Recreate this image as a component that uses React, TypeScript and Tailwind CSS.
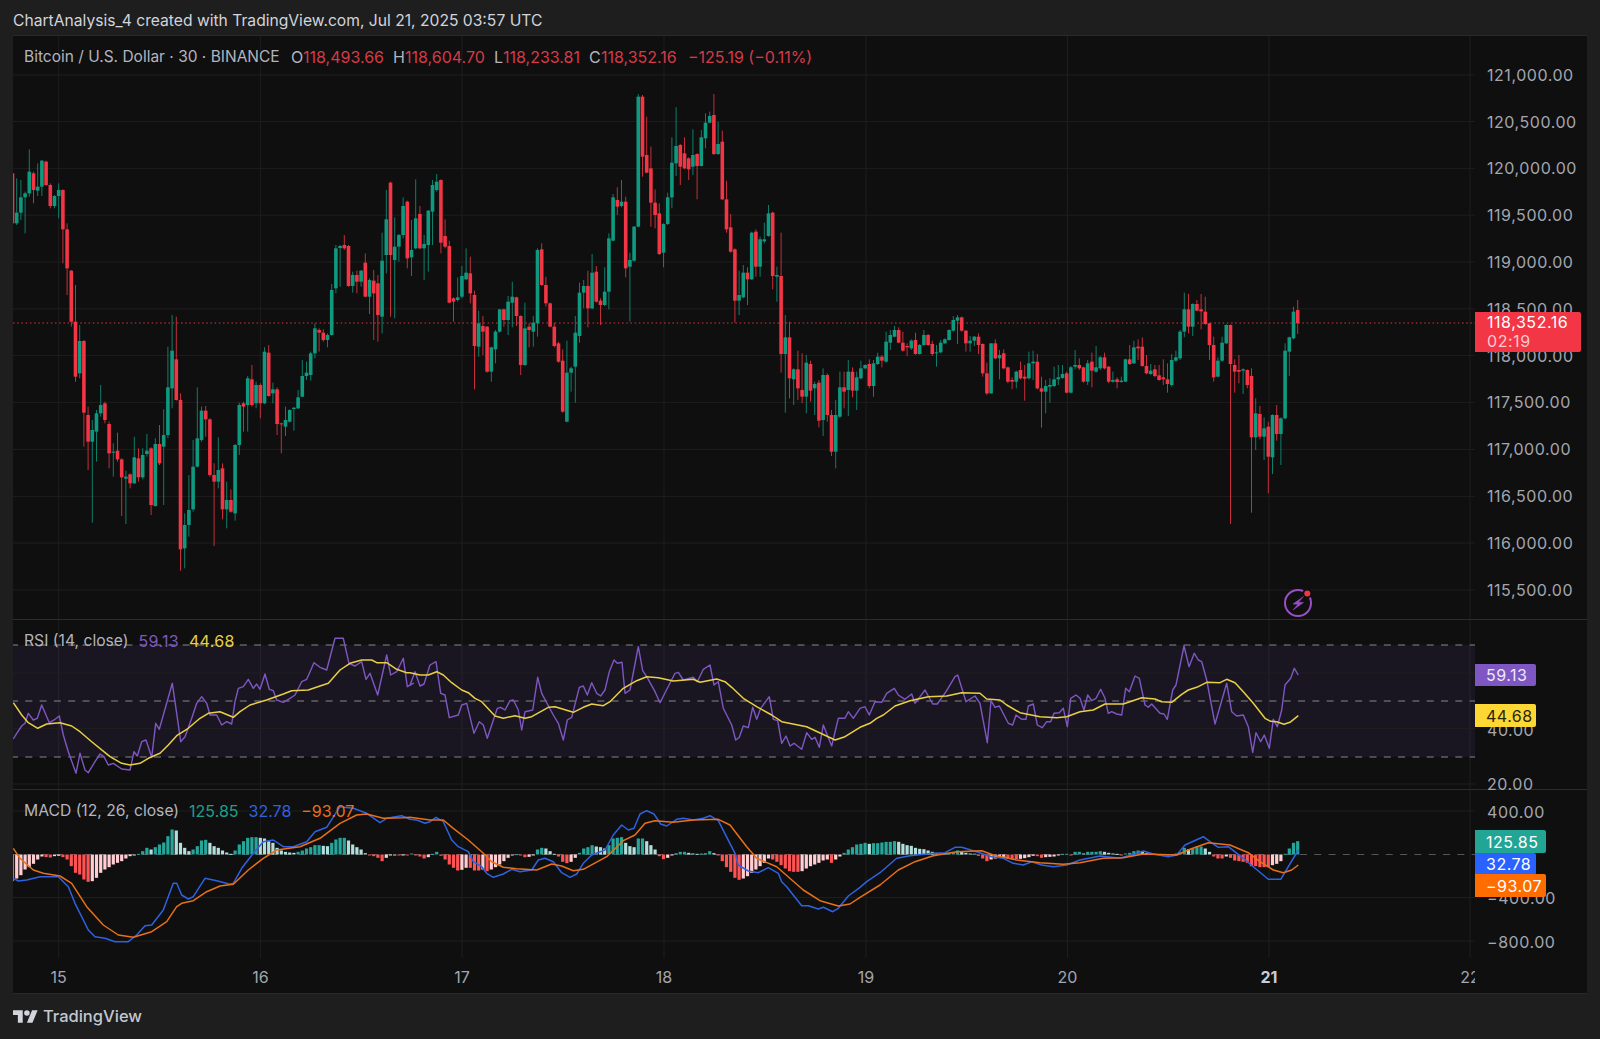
const GREEN = "#0f9a80";
const RED = "#f23645";
const PURPLE = "#7e57c2";
const YELLOW = "#e9cf45";
const BLUE = "#2f62e0";
const ORANGE = "#e8701a";
const GRID = "#1e1e1e";

const PLOT_X = 13;
const PLOT_W = 1462;
const barX = (i: number) => 12.5 + 4.2 * i;
const dayLines = [58.7, 260.4, 462, 664, 866, 1067.5, 1269, 1470];

// candles traced from the picture: color body-top body-bottom high low, offset by the crop they were read from
const candleRows: [number, string][] = [
  [140, `r100,250,100,255 g218,250,115,255 g172,218,120,240 g160,172,155,280 g95,160,28,170 r100,150,95,190 g140,152,70,168 g62,140,60,168 r65,135,62,138 r135,198,130,205
g168,198,165,205 g150,168,130,235 r150,268,148,370 r268,385,250,465 r392,545,390,560 r545,710,435,725 g603,700,555,715 r603,818,600,920 r825,905,800,990 g870,905,840,1148
g820,875,810,965 g795,820,735,830 r790,840,785,850 r852,940,845,985 g935,938,910,1010 r932,958,878,965 r958,1012,955,1128 g1010,1016,992,1152 r1003,1030,1000,1045 g952,1030,890,1032
r955,1012,925,1025 g945,1012,925,1018 g932,942,882,950 r925,1095,922,1125 g912,1098,895,1100 r912,970,855,975 g885,920,808,1095 g742,885,620,895 g632,745,525,805 r658,780,530,782
r780,1228,760,1292 g1155,1225,1120,1285 g1110,1155,1005,1190 g980,1108,900,1115 g895,980,742,982 g812,900,800,905 r812,838,798,890 r838,1005,835,1010 r1005,1025,970,1218 g990,1025,892,1045
r985,1108,970,1138 g1080,1108,1025,1165 r1080,1115,1048,1118 g915,1120,912,1142 g795,915,788,945 r790,800,785,875 g715,795,708,875 r718,795,675,800 g735,790,725,805 r735,790,730,835
g635,790,622,792 r638,768,615,770 g748,760,728,790 r748,852,742,885 r850,853,848,940 g840,860,800,888 g810,845,808,848 g803,807,802,872 g772,805,750,807 g708,770,660,772
g698,708,665,720 g640,705,635,722 g565,640,550,655 r570,578,565,635 r578,600,568,605 g585,600,580,622 g450,585,432,587 g325,445,315,460 g318,324,315,440 r315,325,285,330
r318,438,315,440 g405,438,395,458 r405,425,392,460 g392,425,390,440 r368,470,340,472 g420,470,415,522 r422,460,390,600 r430,525,405,605 g362,530,278,580 g238,345,150,400
r128,345,125,530 g320,360,232,535 g285,320,282,365 g198,285,172,295 r185,355,182,385 g330,352,240,408 g235,325,118,328 r222,325,198,328 g312,325,285,420 g212,315,210,395`],
  [80, `g315,395,300,495 g305,330,282,335 r300,488,298,520 r468,500,418,505 r498,668,482,670 r655,665,652,725 g652,660,592,665 g588,650,558,655 g578,598,505,600 r580,640,530,670
r645,798,632,928 g730,800,692,830 r738,755,708,825 r740,875,738,878 g802,875,800,905 g755,808,750,850 g688,755,688,758 r688,720,686,740 g665,720,648,765 g650,668,605,742
r652,708,650,738 r708,855,706,885 g745,855,668,858 r740,750,730,802 g728,755,708,800 g510,730,505,770 r508,615,490,618 r615,670,590,680 r670,740,668,742 r740,798,728,802
r790,845,785,848 r842,995,808,998 g878,1025,782,1027 g865,878,860,935 g758,860,708,968 g638,768,608,788 g618,638,600,685 r618,685,572,742 g578,685,522,688 r575,665,558,668
r662,675,655,735 g635,675,562,678 g475,635,460,688 g352,482,342,484 r360,380,322,405 g365,378,300,382 r365,565,350,592 g540,560,518,725 g440,542,438,545 g50,440,42,442
r50,230,45,290 r225,278,110,280 r265,368,200,440 r368,405,328,445 r400,522,370,525 g432,518,430,562 g352,432,338,435 g248,352,172,385 g198,250,82,288 r195,260,192,315
r220,265,172,268 r235,268,232,300 g225,260,148,285 r222,258,220,358 g172,258,150,260 g128,175,100,205 g108,128,95,130 r105,222,42,225 g192,222,125,225 r185,358,152,360
r358,448,302,458 r442,515,402,518 r508,662,505,728 g645,662,572,705 g578,652,555,655 r578,598,562,675 g458,598,455,600 r455,560,448,590 g478,560,470,590 g478,484,428,490
g400,468,375,470 r398,588,395,628 g585,590,560,665 r588,822,458,878 g772,822,705,998 r772,895,725,955 g868,898,865,975 r868,925,812,960 r930,950,820,970 g848,950,825,1000
r852,932,842,965 g912,925,905,1005 r908,1022,900,1042 g885,1020,865,1068 r885,1005,880,1025 r1005,1115,990,1128 g1005,1115,960,1165 g922,1010,875,1015 r922,935,875,985 g875,930,840,1008`],
  [280, `r275,332,262,352 g292,332,275,390 g265,295,242,298 g255,265,253,268 r252,318,238,325 g250,318,240,350 g230,252,218,255 r230,242,225,262 g185,245,155,248 g165,188,150,210
g150,170,138,172 r150,188,142,190 r188,212,155,215 r198,202,190,228 g182,205,178,210 r180,222,158,224 g195,222,192,224 g165,195,150,197 r165,195,162,198 r192,222,182,228
g217,220,195,260 g188,217,180,220 g178,190,175,192 g150,180,148,182 g120,152,108,155 g112,122,105,192 r112,152,110,155 r152,190,150,215 g182,190,168,215 g170,182,168,198
r170,195,160,222 r192,280,190,290 r280,340,248,345 g190,340,190,342 r190,235,178,238 g225,235,210,298 r220,265,208,268 r262,305,260,310 r300,305,292,328 g275,305,272,325
r270,295,245,298 r290,296,255,362 g250,295,215,298 g245,250,212,300 r245,325,222,328 r325,335,290,443 g318,335,300,400 g315,320,295,368 g298,318,260,322 g292,298,255,315
g282,294,255,296 r280,338,275,340 g262,338,258,340 g255,260,210,268 r255,265,235,270 r262,305,260,308 g250,305,240,315 r245,272,218,322 g262,275,198,278 g232,265,228,270
r232,265,218,268 r260,305,258,310 g300,305,275,308 r298,306,292,325 g302,306,290,308 g238,305,236,306 r238,252,195,255 g202,250,182,252 r200,205,178,240 r200,258,172,260
r258,280,225,283 g272,282,252,285 r268,288,255,292 r286,300,255,302 r292,298,238,315 r298,312,250,338 g240,315,222,320 g232,242,212,245 g155,235,150,240 g88,155,38,172
r88,140,42,160 g72,140,70,168 r72,92,60,94 r88,94,42,148 r95,132,50,135 r130,195,128,240 r195,292,170,305 g242,290,232,292 g188,242,170,245 g135,190,133,192
r135,252,133,732 r255,275,238,338 r270,275,225,310 g268,272,265,342 r270,315,268,325 r288,472,265,698 g400,472,355,510 r402,470,378,478 g445,470,412,540 r440,530,425,640
g405,532,403,582 r405,462,375,482 g415,462,412,555 g212,415,190,418 g172,215,170,288 g95,175,80,178 r90,130,60,162`],
];

const candles = candleRows.flatMap(([y0, text]) =>
  text.trim().split(/\s+/).map((item) => {
    const [top, bottom, high, low] = item.slice(1).split(",").map((n) => y0 + Number(n) / 3);
    return { up: item[0] === "g", top, bottom, high, low };
  })
);

// macd histogram, heights in crop units (3 = 1px)
const histogram = [
  -80, -72, -62, -45, -38, -28, -15, -6, -8, -9, -5, -4, -8, -15, -35, -55, -60, -75, -82, -80,
  -70, -55, -45, -38, -30, -25, -20, -12, -5, -3, 2, 10, 20, 15, 22, 30, 36, 55, 75, 72,
  35, 20, 10, 15, 25, 42, 44, 35, 25, 20, 12, 6, 2, 12, 30, 40, 50, 52, 52, 50,
  48, 40, 35, 20, 12, 8, 6, 5, 8, 12, 18, 22, 28, 28, 26, 25, 35, 45, 50, 50,
  42, 30, 22, 15, 4, -3, -5, -10, -20, -10, -3, -2, -2, -1, -3, 3, -3, -6, -12, -8,
  2, 8, -4, -15, -30, -40, -48, -46, -40, -40, -48, -48, -45, -50, -45, -38, -30, -20, -10, -2,
  1, -2, -8, -7, -3, 15, 20, 18, 10, 2, -6, -22, -26, -22, -10, 5, 18, 22, 28, 24,
  22, 18, 28, 48, 50, 52, 35, 25, 22, 48, 48, 40, 28, 15, -5, -14, -10, -2, 4, 8,
  8, 5, 3, 2, 3, 4, 10, 4, -3, -20, -38, -52, -70, -76, -72, -65, -55, -45, -35, -25,
  -12, -15, -22, -32, -42, -50, -52, -52, -50, -42, -35, -30, -25, -18, -15, -25, -15, -6, 5, 15,
  22, 30, 32, 35, 32, 34, 34, 36, 38, 38, 40, 38, 32, 28, 26, 20, 17, 16, 12, 8,
  4, 3, 4, 5, 7, 12, 8, 5, 3, 3, -4, -12, -20, -15, -12, -10, -8, -12, -14, -14,
  -13, -11, -8, -4, -5, -10, -8, -7, -6, -2, 2, 2, -1, 8, 8, 3, 8, 8, 8, 10,
  8, 5, 3, 2, -2, 3, 5, 10, 12, 10, 4, 2, 2, 1, -2, -2, 1, 3, 6, 20,
  16, 18, 24, 24, 18, 8, -6, -12, -12, -6, -10, -18, -20, -22, -25, -35, -35, -38, -38, -38,
  -32, -28, -20, 2, 18, 35, 40,
];

const histColor = (v: number, prev: number) => {
  if (v >= 0) return v >= prev ? "#26a69a" : "#b2dfdb";
  return v <= prev ? "#ff5252" : "#ffcdd2";
};

const crop = (x0: number, y0: number, text: string) =>
  text
    .trim()
    .split(/\s+/)
    .map((p) => {
      const [x, y] = p.split(",").map(Number);
      return `${(x0 + x / 3).toFixed(1)},${(y0 + y / 3).toFixed(1)}`;
    })
    .join(" ");

const rsiLine = [
  crop(0, 620, "40,357 50,340 65,318 75,310 85,280 100,300 112,295 125,255 148,308 165,298 178,288 190,345 205,395 228,460 240,400 255,450 265,458 285,425 300,402 312,410 325,435 340,430 365,447 390,450 402,395 412,408 425,365 438,360 455,412 467,310 478,328 517,190 530,280 542,365 555,350 575,295 590,250 605,230 620,250 630,285 650,285 665,315 680,305 695,312 705,245 715,205 730,200 745,178 760,205 770,192 780,208 795,162 808,208 820,212 830,240 850,247 870,235 885,225 905,185 920,178 942,128 960,142 980,150 1005,55 1030,55 1047,130 1065,138 1085,125 1098,178 1110,160 1133,225 1160,105 1172,165 1190,155 1210,115 1222,200 1240,190"),
  crop(410, 630, "0,165 15,125 30,168 42,162 60,105 78,95 92,190 105,195 118,263 145,255 155,225 170,220 192,310 208,275 220,285 232,325 262,235 272,232 285,240 300,212 310,210 325,240 335,300 345,245 368,240 383,142 395,190 430,255 445,280 460,330 472,270 485,262 508,172 520,168 532,195 545,158 560,190 572,198 585,180 598,125 612,90 622,100 636,97 645,190 660,180 685,50 698,122 710,140 735,185 750,218 795,130 805,127 820,150 850,142 862,155 880,118 900,105 912,165 925,155 940,235 965,285 977,330 988,322 1000,288 1015,293 1028,232 1040,268 1052,235 1078,200 1090,268 1103,272 1115,340 1128,318 1140,348 1152,340 1175,358 1190,308 1205,328 1215,322 1228,352 1240,285 1265,348 1285,265 1305,265 1315,245 1330,265"),
  crop(860, 630, "0,235 15,230 28,255 45,215 65,217 80,190 103,175 115,195 135,208 155,192 165,220 195,180 218,222 232,222 258,185 285,140 293,135 318,215 345,198 360,220 382,338 393,212 405,232 418,228 445,280 458,285 468,255 485,268 498,268 505,228 520,222 532,285 547,293 560,275 572,275 582,250 598,248 610,235 622,290 632,205 648,195 660,205 672,240 683,195 695,212 708,205 722,178 735,205 745,250 755,245 770,252 785,255 797,175 808,185 825,138 838,145 855,225 865,232 875,222 900,250 912,252 922,268 938,180 948,165 972,48 987,110 1003,70 1015,90 1025,95 1040,150 1065,282 1100,160 1115,245 1130,258 1150,255 1165,290 1178,367 1188,308 1202,335 1213,315 1228,355 1240,268 1252,290 1265,240 1275,165 1292,145 1303,115 1315,135"),
].join(" ");

const rsiAvg = [
  crop(0, 620, "40,248 65,285 85,308 113,325 140,312 180,308 215,318 240,335 275,365 330,410 365,430 390,435 420,430 445,415 480,400 505,375 530,347 565,325 600,295 625,280 660,275 700,292 720,275 750,255 800,240 850,222 875,212 925,210 960,198 985,190 1020,150 1050,130 1085,120 1115,120 1130,128 1160,128 1190,148 1220,158"),
  crop(410, 630, "0,128 30,135 55,135 80,125 100,135 125,158 155,180 175,188 195,205 215,215 255,258 280,265 315,257 345,265 365,260 415,232 435,230 490,247 520,232 545,222 580,227 600,215 640,175 680,152 710,140 745,143 790,153 850,148 870,157 920,147 945,155 965,172 1000,205 1040,230 1085,255 1115,275 1190,290 1275,330 1305,320"),
  crop(860, 630, "0,292 30,280 50,265 70,255 105,228 150,212 205,200 260,198 305,188 360,190 380,207 420,210 440,225 480,248 540,260 590,263 620,260 660,245 700,240 735,222 790,222 845,203 885,207 905,215 935,217 965,193 985,180 1010,172 1040,157 1080,158 1100,148 1125,158 1150,185 1180,220 1215,265 1232,274 1250,275 1272,283 1290,277 1315,257"),
].join(" ");

const macdLine = [
  crop(0, 620, "40,775 55,783 80,780 120,770 175,770 205,800 225,850 265,930 285,950 315,955 345,965 385,965 410,945 435,917 455,915 490,870 520,790 530,790 545,825 565,837 580,830 615,775 650,782 690,793 700,790 725,745 760,700 790,665 820,660 850,680 880,680 920,665 945,635 980,622 1020,560 1060,565 1100,580 1140,608 1160,595 1205,587"),
  crop(410, 790, "0,88 20,90 45,100 60,95 78,82 100,95 125,150 145,170 175,185 190,215 215,230 230,250 250,262 280,252 305,238 330,245 365,240 385,210 405,205 430,215 455,248 480,262 500,252 520,220 545,195 585,180 610,135 635,105 655,120 672,115 690,72 710,62 732,72 752,102 770,108 800,88 820,85 850,90 880,85 900,77 925,92 975,190 985,225 1015,243 1045,248 1075,233 1105,250 1115,275 1130,290 1175,347 1195,347 1225,357 1240,352 1268,365 1285,355 1315,318"),
  crop(860, 790, "0,292 20,275 60,248 110,205 150,197 220,190 255,188 285,172 305,172 340,182 370,192 395,200 430,205 460,220 490,225 515,215 545,225 580,230 620,225 660,210 720,198 780,205 830,190 850,183 880,192 925,200 950,195 975,165 1030,140 1050,155 1075,172 1105,170 1150,205 1180,230 1225,268 1262,268 1315,180"),
].join(" ");

const macdSignal = [
  crop(0, 620, "40,685 60,715 100,750 130,760 180,768 215,790 260,860 310,915 355,945 400,952 455,935 500,905 530,860 545,850 580,842 620,815 660,798 700,793 745,750 790,715 830,690 900,680 960,655 1020,610 1070,585 1100,582 1150,595 1210,593"),
  crop(410, 790, "0,82 60,90 100,90 130,115 175,150 220,190 245,215 280,232 320,236 380,240 425,222 455,228 490,242 520,238 590,200 640,152 675,135 705,100 735,92 790,97 850,90 925,88 960,105 1010,170 1040,205 1100,230 1180,300 1230,332 1285,348 1320,342"),
  crop(860, 790, "0,322 60,285 115,240 165,215 220,197 290,185 365,182 400,195 470,210 540,218 610,223 660,218 730,205 790,203 850,192 950,195 990,178 1045,158 1110,165 1165,188 1200,215 1240,240 1270,248 1295,240 1315,225"),
].join(" ");

const priceTicks = [
  { label: "121,000.00", y: 75 },
  { label: "120,500.00", y: 121.6 },
  { label: "120,000.00", y: 168.4 },
  { label: "119,500.00", y: 215.2 },
  { label: "119,000.00", y: 262 },
  { label: "118,500.00", y: 308.8 },
  { label: "118,000.00", y: 355.6 },
  { label: "117,500.00", y: 402.4 },
  { label: "117,000.00", y: 449.4 },
  { label: "116,500.00", y: 496.4 },
  { label: "116,000.00", y: 543 },
  { label: "115,500.00", y: 590 },
];
const rsiTicks = [
  { label: "40.00", y: 730 },
  { label: "20.00", y: 784 },
];
const macdTicks = [
  { label: "400.00", y: 811.5 },
  { label: "−400.00", y: 898 },
  { label: "−800.00", y: 941.5 },
];

function PlotSvg({ y, h, children }: { y: number; h: number; children: React.ReactNode }) {
  return (
    <svg className="block" width={PLOT_W} height={h} viewBox={`${PLOT_X} ${y} ${PLOT_W} ${h}`}>
      {dayLines.map((x) => (
        <line key={x} x1={x} x2={x} y1={y} y2={y + h} stroke={GRID} />
      ))}
      {children}
    </svg>
  );
}

function HLines({ ys }: { ys: number[] }) {
  return (
    <>
      {ys.map((y) => (
        <line key={y} x1={PLOT_X} x2={PLOT_X + PLOT_W} y1={y} y2={y} stroke={GRID} />
      ))}
    </>
  );
}

function ScaleLabels({ ticks, top }: { ticks: { label: string; y: number }[]; top: number }) {
  return (
    <>
      {ticks.map((t) => (
        <span
          key={t.label}
          className="absolute left-[12px] text-[16px] leading-[18px] tracking-[0.55px] text-[#a3a6af] whitespace-nowrap"
          style={{ top: t.y - top - 9 }}
        >
          {t.label}
        </span>
      ))}
    </>
  );
}

function PricePane() {
  return (
    <div className="flex h-[583px]">
      <div className="relative w-[1462px] overflow-hidden">
        <PlotSvg y={36} h={583}>
          <HLines ys={priceTicks.map((t) => t.y)} />
          <line x1={13} x2={1475} y1={323} y2={323} stroke={RED} strokeDasharray="1.6 2.6" strokeOpacity={0.85} />
          {candles.map((c, i) => {
            const color = c.up ? GREEN : RED;
            return (
              <g key={i}>
                <line x1={barX(i)} x2={barX(i)} y1={c.high} y2={c.low} stroke={color} strokeOpacity={0.8} />
                <rect x={barX(i) - 1.8} y={c.top} width={3.6} height={Math.max(c.bottom - c.top, 1)} fill={color} />
              </g>
            );
          })}
          {/* real-time data icon */}
          <circle cx={1298} cy={603} r={13} fill="none" stroke="#9b4fc4" strokeWidth={2} />
          <circle cx={1307.3} cy={593.5} r={5} fill="#0f0f0f" />
          <circle cx={1307.3} cy={593.5} r={3} fill={RED} />
          <path d="M1303.5 596.5 L1293 604 L1298 604.3 L1293 610 L1303.5 602.5 L1298.5 602.2 Z" fill="#9b4fc4" stroke="#9b4fc4" strokeWidth={0.5} />
        </PlotSvg>
        <div className="absolute left-[11px] top-[10px] flex items-center text-[16px] leading-[22px] whitespace-nowrap text-[#b2b5be]">
          <span className="w-[267px] text-[15.5px]">Bitcoin / U.S. Dollar · 30 · BINANCE</span>
          <span className="w-[12px]">O</span>
          <span className="w-[90px] text-[#d63a48]">118,493.66</span>
          <span className="w-[12px]">H</span>
          <span className="w-[89px] text-[#d63a48]">118,604.70</span>
          <span className="w-[9px]">L</span>
          <span className="w-[86px] text-[#d63a48]">118,233.81</span>
          <span className="w-[12px]">C</span>
          <span className="w-[87px] text-[#d63a48]">118,352.16</span>
          <span className="text-[#d63a48]">−125.19 (−0.11%)</span>
        </div>
      </div>
      <div className="relative w-[112px]">
        <ScaleLabels ticks={priceTicks} top={36} />
        <div className="absolute left-0 top-[276px] flex h-[40px] w-[106px] flex-col rounded-r-[2px] bg-[#f23645] pl-[12px] pt-[1px] text-[16px] leading-[19px] tracking-[0.55px]">
          <span className="text-white">118,352.16</span>
          <span className="text-[#fbc9cd]">02:19</span>
        </div>
      </div>
    </div>
  );
}

function RsiPane() {
  return (
    <div className="flex h-[170px] border-t border-[#2c2c2c]">
      <div className="relative w-[1462px] overflow-hidden">
        <PlotSvg y={620} h={169}>
          <rect x={13} y={645} width={1462} height={112} fill="#7e57c2" fillOpacity={0.1} />
          <HLines ys={[673, 728.5, 784]} />
          {[645, 701, 757].map((y) => (
            <line key={y} x1={13} x2={1475} y1={y} y2={y} stroke="#85868b" strokeDasharray="7 7.3" strokeDashoffset={2} />
          ))}
          <polyline points={rsiLine} fill="none" stroke={PURPLE} strokeWidth={1.4} strokeLinejoin="round" />
          <polyline points={rsiAvg} fill="none" stroke={YELLOW} strokeWidth={1.5} strokeLinejoin="round" />
        </PlotSvg>
        <div className="absolute left-[11px] top-[10px] flex items-center gap-[10px] text-[16px] leading-[22px] whitespace-nowrap text-[#b2b5be]">
          <span className="text-[15.7px]">RSI (14, close)</span>
          <span className="tracking-[0.3px] text-[#7e57c2]">59.13</span>
          <span className="tracking-[0.3px] text-[#e9cf45]">44.68</span>
        </div>
      </div>
      <div className="relative w-[112px]">
        <ScaleLabels ticks={rsiTicks} top={620} />
        <div className="absolute left-0 top-[44px] flex h-[22px] w-[61px] items-center rounded-r-[2px] bg-[#7e57c2] pl-[11px] text-[16px] tracking-[0.5px] text-[#efe9fb]">
          59.13
        </div>
        <div className="absolute left-0 top-[84px] flex h-[23px] w-[61px] items-center rounded-r-[2px] bg-[#fdd835] pl-[11px] text-[16px] tracking-[0.5px] text-[#2b2408]">
          44.68
        </div>
      </div>
    </div>
  );
}

function MacdPane() {
  return (
    <div className="flex h-[169px] border-t border-[#2c2c2c]">
      <div className="relative w-[1462px] overflow-hidden">
        <PlotSvg y={790} h={168}>
          <HLines ys={[811, 897.5, 941]} />
          <line x1={13} x2={1475} y1={854.5} y2={854.5} stroke="#55565a" strokeDasharray="7 7.3" />
          {histogram.map((v, i) => {
            const h = Math.abs(v) / 3;
            return (
              <rect
                key={i}
                x={barX(i) - 1.6}
                y={v >= 0 ? 854.5 - h : 854.5}
                width={3.2}
                height={Math.max(h, 1)}
                fill={histColor(v, i ? histogram[i - 1] : 0)}
              />
            );
          })}
          <polyline points={macdLine} fill="none" stroke={BLUE} strokeWidth={1.5} strokeLinejoin="round" />
          <polyline points={macdSignal} fill="none" stroke={ORANGE} strokeWidth={1.5} strokeLinejoin="round" />
        </PlotSvg>
        <div className="absolute left-[11px] top-[10px] flex items-center gap-[10px] text-[16px] leading-[22px] whitespace-nowrap text-[#b2b5be]">
          <span className="text-[15.7px]">MACD (12, 26, close)</span>
          <span className="text-[#1f9f8a]">125.85</span>
          <span className="text-[#2f62e0]">32.78</span>
          <span className="text-[#e8701a]">−93.07</span>
        </div>
      </div>
      <div className="relative w-[112px]">
        <ScaleLabels ticks={macdTicks} top={790} />
        <div className="absolute left-0 top-[40px] flex h-[23px] w-[71px] items-center rounded-r-[2px] bg-[#22a594] pl-[11px] text-[16px] tracking-[0.5px] text-white">
          125.85
        </div>
        <div className="absolute left-0 top-[63px] flex h-[22px] w-[61px] items-center rounded-r-[2px] bg-[#2962ff] pl-[11px] text-[16px] tracking-[0.5px] text-white">
          32.78
        </div>
        <div className="absolute left-0 top-[84px] flex h-[23px] w-[71px] items-center rounded-r-[2px] bg-[#ff6d00] pl-[11px] text-[16px] tracking-[0.5px] text-white">
          −93.07
        </div>
      </div>
    </div>
  );
}

function TimeAxis() {
  const days = ["15", "16", "17", "18", "19", "20", "21", "22"];
  return (
    <div className="relative h-[35px] w-[1462px] overflow-hidden">
      {days.map((d, i) => (
        <span
          key={d}
          className={`absolute top-[9px] w-[40px] -translate-x-1/2 text-center text-[16px] leading-[20px] ${
            d === "21" ? "font-bold text-[#c9ccd4]" : "text-[#a3a6af]"
          }`}
          style={{ left: dayLines[i] - PLOT_X }}
        >
          {d}
        </span>
      ))}
    </div>
  );
}

export default function App() {
  return (
    <div className="flex h-[1039px] w-[1600px] flex-col overflow-hidden bg-[#1e1e1e] [font-family:Inter,sans-serif]">
      <div className="flex h-[35px] shrink-0 items-center pl-[13px] pt-[6px] text-[15.65px] text-[#d1d4dc]">
        ChartAnalysis_4 created with TradingView.com, Jul 21, 2025 03:57 UTC
      </div>
      <div className="ml-[13px] h-[959px] w-[1574px] shrink-0 border-y border-[#2a2a2a] bg-[#0f0f0f]">
        <PricePane />
        <RsiPane />
        <MacdPane />
        <TimeAxis />
      </div>
      <div className="flex flex-1 items-center gap-[5px] pl-[13px] pb-[1px]">
        <svg width="25" height="13" viewBox="0 4 36 18" fill="#d1d4dc">
          <path d="M14 22H7V11H0V4h14v18zM28 22h-8l7.5-18h8L28 22z" />
          <circle cx="20" cy="8" r="4" />
        </svg>
        <span className="text-[16.5px] font-medium text-[#c4c7cf]">TradingView</span>
      </div>
    </div>
  );
}
